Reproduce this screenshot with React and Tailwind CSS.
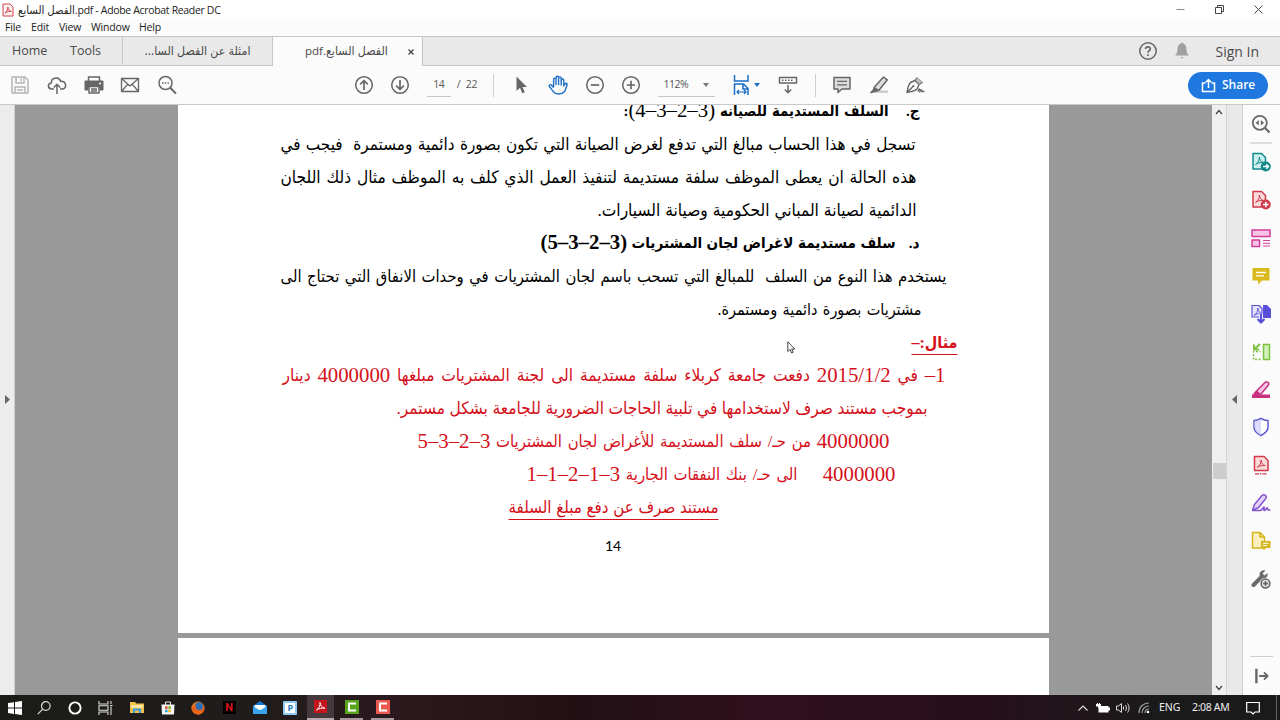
import clsx from "clsx";

const UI = "font-['Open_Sans','DejaVu_Sans_Condensed','DejaVu_Sans',sans-serif]";
const DOC =
  "font-['Liberation_Serif','DejaVu_Sans_Condensed','DejaVu_Sans',serif]";

function Icon({ size = 20, className, children }) {
  return (
    <svg
      width={size}
      height={size}
      viewBox="0 0 20 20"
      fill="none"
      stroke="currentColor"
      strokeWidth="1.5"
      strokeLinejoin="round"
      className={clsx("block shrink-0", className)}
    >
      {children}
    </svg>
  );
}

const SWOOSH = "M5.5 12.5C8.5 10.5 9.6 7.5 9.3 5C9.5 8 11 10 13.5 10.6C10.5 10.2 7.5 10.8 5.5 12.5Z";

function TitleBar() {
  return (
    <div className="flex h-[19px] items-center bg-white pl-[2px] text-[#222]">
      <svg width="12" height="14" viewBox="0 0 12 14" fill="none" stroke="#d0444a">
        <path d="M1 1H8L11 4V13H1Z" fill="#fdf1f1" />
        <path d="M3 10C5 8.500 6 6.500 5.800 4C6 6.500 7.500 8 9.300 8.500C7 8.300 5 8.800 3 10Z" />
      </svg>
      <span className="ml-[4px] text-[10.5px] leading-[19px] tracking-[-0.33px] whitespace-nowrap">
        <bdi dir="ltr">
          <span className="text-[11.3px] tracking-normal">الفصل السابع</span>.pdf - Adobe Acrobat Reader DC
        </bdi>
      </span>
      <svg width="100" height="19" viewBox="0 0 100 19" fill="none" stroke="#444" className="ml-auto overflow-visible">
        <path d="M16.500 9.500H24.500" stroke="#888" />
        <path d="M55.500 7.500H61.500V13.500H55.500ZM57.500 7V5.500H63.500V11.500H62" />
        <path d="M94.500 5.500L102.500 13.500M102.500 5.500L94.500 13.500" />
      </svg>
      <span className="w-[20px]" />
    </div>
  );
}

function MenuBar() {
  return (
    <div className="flex h-[17px] items-center bg-[#fbfbfb] pl-[5px] text-[10.5px] leading-[17px] tracking-[-0.15px] text-[#222]">
      <span className="w-[26px]">File</span>
      <span className="w-[28px]">Edit</span>
      <span className="w-[32px]">View</span>
      <span className="w-[48px]">Window</span>
      <span>Help</span>
    </div>
  );
}

function TabBar() {
  return (
    <div className="flex h-[30px] items-stretch border-y border-[#c6c6c6] bg-[#e9e9e9] text-[13px] text-[#4a4a4a]">
      <div className="flex w-[123px] items-center border-r border-[#c6c6c6] pl-[12px] text-[12.5px]">
        <span className="w-[58px]">Home</span>
        <span>Tools</span>
      </div>
      <div className="flex w-[150px] items-center justify-center border-r border-[#c6c6c6] text-[12.3px] whitespace-nowrap">
        <bdi dir="rtl">امثلة عن الفصل السا...</bdi>
      </div>
      <div className="-mb-px flex w-[150px] items-center border-r border-[#c6c6c6] bg-[#fbfbfb] pr-[8px] pl-[32px] text-[11.5px] whitespace-nowrap">
        <bdi dir="rtl">
          <span className="text-[12.3px]">الفصل السابع</span>.pdf
        </bdi>
        <svg width="6" height="6" viewBox="0 0 6 6" stroke="#444" strokeWidth="1.3" className="ml-auto">
          <path d="M.5 .5L5.500 5.500M5.500 .5L.5 5.500" />
        </svg>
      </div>
      <div className="ml-auto flex items-center pr-[21px]">
        <Icon size={20} className="text-[#666]">
          <circle cx="10" cy="10" r="8.200" />
          <path d="M7.600 8C7.600 5.200 12.300 5.200 12.300 7.900C12.300 9.600 10 9.700 10 11.700M10 13.200V15" strokeWidth="1.700" />
        </Icon>
        <Icon size={18} className="ml-[15px] text-[#a0a0a0]">
          <path d="M10 1.500C6 2 5 5 5 9C5 12 3.500 13.500 2.500 15H17.500C16.500 13.500 15 12 15 9C15 5 14 2 10 1.500ZM8.500 17H11.500V18H8.500Z" fill="currentColor" stroke="none" />
          <circle cx="10" cy="2" r="1.300" fill="currentColor" stroke="none" />
        </Icon>
        <span className="ml-[24px] text-[14px] whitespace-nowrap">Sign In</span>
      </div>
    </div>
  );
}

function ToolCell({ children, className = "text-[#666]" }) {
  return (
    <div className={clsx("flex w-[36.7px] shrink-0 items-center justify-center", className)}>
      {children}
    </div>
  );
}

function Caret({ className }) {
  return (
    <svg width="6" height="4" viewBox="0 0 6 4" fill="currentColor" className={className}>
      <path d="M0 0H6L3 4Z" />
    </svg>
  );
}

function Toolbar() {
  return (
    <div className="flex h-[39px] items-center border-b border-[#c9c9c9] bg-[#fbfbfb] pl-[2px] text-[10.5px] text-[#555]">
      <ToolCell className="text-[#b5b5b5]">
        <Icon>
          <path d="M2 2H15L18 5V18H2ZM6 2V8H14V2M5 18V12H15V18M11 3.500V6.500M7 15H13" />
        </Icon>
      </ToolCell>
      <ToolCell>
        <Icon>
          <path d="M7 14H5C.5 14 .2 8.500 4.300 8C4.300 2.500 12 1 13.600 6.300C19.500 5.800 20.500 14 15 14H13M10 19V9.500M6.800 12.500L10 9.300L13.200 12.500" />
        </Icon>
      </ToolCell>
      <ToolCell>
        <Icon>
          <path d="M4.500 6V2H15.500V6" />
          <path d="M1 6H19V15H16V12H4V15H1Z" fill="currentColor" strokeWidth="1" />
          <path d="M5 11.500H15V18H5ZM7 14H13M7 16H13" fill="#fbfbfb" />
          <path d="M15 8.500H17" stroke="#fff" />
        </Icon>
      </ToolCell>
      <ToolCell>
        <Icon>
          <path d="M1.500 3.500H18.500V16.500H1.500ZM1.500 3.500L10 11L18.500 3.500M1.500 16.500L7.800 9.200M18.500 16.500L12.200 9.200" strokeWidth="1.300" />
        </Icon>
      </ToolCell>
      <ToolCell>
        <Icon>
          <circle cx="8.500" cy="8" r="6.500" />
          <path d="M13.200 12.800L19 18.600" strokeWidth="2" />
          <path d="M5 8H6.500M7.800 8H9.300M10.600 8H12" />
        </Icon>
      </ToolCell>

      <div className="ml-[160px] flex">
        <ToolCell>
          <Icon>
            <circle cx="10" cy="10" r="8.300" />
            <path d="M10 15V5.500M6.200 9.300L10 5.500L13.800 9.300" strokeWidth="1.700" />
          </Icon>
        </ToolCell>
        <ToolCell>
          <Icon>
            <circle cx="10" cy="10" r="8.300" />
            <path d="M10 5V14.500M6.200 10.700L10 14.500L13.800 10.700" strokeWidth="1.700" />
          </Icon>
        </ToolCell>
      </div>
      <div className="ml-[8px] flex h-[24px] w-[24px] items-center justify-center border-b border-[#c6c6c6] tracking-[-0.4px]">
        14
      </div>
      <span className="ml-[6px] w-[9px]">/</span>
      <span className="w-[12px] tracking-[-0.4px]">22</span>
      <div className="ml-[15px] h-[23px] w-px bg-[#cfcfcf]" />
      <div className="ml-[9px] flex">
        <ToolCell>
          <Icon>
            <path d="M5.500 1.500V16L9 12.800L11.300 18.300L13.800 17.200L11.500 12H16Z" fill="currentColor" stroke="none" />
          </Icon>
        </ToolCell>
        <ToolCell className="text-[#1a6dc4]">
          <Icon>
            <path d="M5.600 12V4.500C5.600 2.600 8 2.600 8 4.500V9.500V2.800C8 .8 10.600 .8 10.600 2.800V9.500V3.300C10.600 1.400 13.200 1.400 13.200 3.300V10V5.300C13.200 3.500 15.800 3.500 15.800 5.300V11L17 9C18 7.500 19.500 8.500 19 10C17.500 14.500 17 19 11 19C6 19 5 16.500 1.500 11.500C.5 10 2.500 9 3.600 10.200L5.600 12.600" strokeWidth="1.400" />
          </Icon>
        </ToolCell>
        <ToolCell>
          <Icon>
            <circle cx="10" cy="10" r="8.300" />
            <path d="M5.800 10H14.200" strokeWidth="1.700" />
          </Icon>
        </ToolCell>
        <ToolCell>
          <Icon>
            <circle cx="10" cy="10" r="8.300" />
            <path d="M5.800 10H14.200M10 5.800V14.200" strokeWidth="1.700" />
          </Icon>
        </ToolCell>
      </div>
      <div className="ml-[8px] flex h-[24px] w-[57px] items-center border-b border-[#c6c6c6] pr-[6px] pl-[6px] tracking-[-0.5px]">
        112%
        <Caret className="ml-auto text-[#777]" />
      </div>
      <Icon className="ml-[16px] text-[#1a6dc4]">
        <path d="M3.500 0V6H17V0M3.500 20V9H12.500L17 13.500V20M12 9V14H17" strokeLinejoin="miter" />
        <path d="M6 17H15M8 15L6 17L8 19M13 15L15 17L13 19" strokeWidth="1.200" />
      </Icon>
      <Caret className="ml-[3px] text-[#1a6dc4]" />
      <div className="ml-[18px]">
        <Icon className="text-[#666]">
          <path d="M1.500 2.500H18.500V8H1.500ZM10 10V17.500M6.800 14.500L10 17.700L13.200 14.500" />
          <path d="M4 5.300H16" strokeDasharray="1.500 1.500" />
        </Icon>
      </div>
      <div className="ml-[17px] h-[23px] w-px bg-[#cfcfcf]" />
      <div className="ml-[8px] flex">
        <ToolCell>
          <Icon>
            <path d="M2 2.500H18V14H10L6 17.500V14H2Z" fill="#ddd" />
            <path d="M5 6.300H15M5 9.800H15" strokeWidth="1.200" />
          </Icon>
        </ToolCell>
        <ToolCell>
          <Icon>
            <path d="M8 15.500H19V18H5Z" fill="#ccc" stroke="none" />
            <path d="M5.500 12L14.500 2L18.300 4.800L10.200 15L5.500 16.500L2 17.500L4.500 15Z" fill="#ddd" />
            <path d="M5.500 12L10 15L2 17.800Z" fill="currentColor" stroke="none" />
          </Icon>
        </ToolCell>
        <ToolCell>
          <Icon>
            <path d="M2 17.500C3 13 3 10 5.500 7.500L10 5.500L14 9.500L12 14C9.500 16.500 6 16.500 2 17.500ZM2 17.500L8 11.500M10 5.500L12 3L17 7.500L14 9.500" strokeWidth="1.400" />
            <path d="M12.500 2.500L17 7L14 9L11 5Z" fill="#bbb" stroke="none" />
            <circle cx="8.500" cy="11" r="1.100" fill="currentColor" stroke="none" />
            <path d="M13 16.500C14 13 15 13 14.800 17C16 14 17 14 16.800 16.500H19.500" strokeWidth="1.300" />
          </Icon>
        </ToolCell>
      </div>
      <div className="mr-[12px] ml-auto flex h-[27px] w-[80px] items-center rounded-full bg-[#1f78e0] pl-[13px] text-[12px] font-semibold text-white">
        <svg width="15" height="15" viewBox="0 0 15 15" fill="none" stroke="#fff" strokeWidth="1.500">
          <path d="M4.500 5H1.500V13.500H13.500V5H10.500M7.500 10V1.800M4.800 4.300L7.500 1.500L10.200 4.300" />
        </svg>
        <span className="ml-[6px]">Share</span>
      </div>
    </div>
  );
}

// One justified line of the document; type size, width and right edge come in as classes.
function Line({ className, children }) {
  return (
    <div
      className={clsx(
        "h-[33px] leading-[33px] whitespace-nowrap [text-align-last:justify]",
        className
      )}
    >
      {children}
    </div>
  );
}

function Num({ children }) {
  return (
    <span dir="ltr" className="inline-block align-[-1px] text-[20.8px] leading-none">
      {children}
    </span>
  );
}

function Page() {
  return (
    <div
      dir="rtl"
      className={clsx("h-[528px] w-[871px] shrink-0 overflow-hidden bg-white text-black", DOC)}
    >
      <div className="-mt-[10px]">
        <div className="flex h-[33px]">
          <Line className="mr-[129px] w-[16px] text-[15px] font-bold">ج.</Line>
          <Line className="mr-[15px] w-[265px] text-[14.8px]">
            <b>السلف المستديمة للصيانه</b> <Num>(4–3–2–3)</Num>
            <b>:</b>
          </Line>
        </div>
        <Line className="mr-[133px] w-[635px] text-[17px]">
          تسجل في هذا الحساب مبالغ التي تدفع لغرض الصيانة التي تكون بصورة دائمية
          ومستمرة&nbsp; فيجب في
        </Line>
        <Line className="mr-[132px] w-[636px] text-[17.2px]">
          هذه الحالة ان يعطى الموظف سلفة مستديمة لتنفيذ العمل الذي كلف به الموظف
          مثال ذلك اللجان
        </Line>
        <Line className="mr-[132px] w-[319px] text-[17.2px]">
          الدائمية لصيانة المباني الحكومية وصيانة السيارات.
        </Line>
        <div className="flex h-[33px] font-bold">
          <Line className="mr-[129px] w-[11px] text-[15px]">د.</Line>
          <Line className="mr-[13px] w-[355px] text-[15.1px]">
            سلف مستديمة لاغراض لجان المشتريات <Num>(5–3–2–3)</Num>
          </Line>
        </div>
        <Line className="mr-[102px] w-[666px] text-[16.5px]">
          يستخدم هذا النوع من السلف&nbsp; للمبالغ التي تسحب باسم لجان المشتريات في
          وحدات الانفاق التي تحتاج الى
        </Line>
        <Line className="mr-[127px] w-[204px] text-[16px]">مشتريات بصورة دائمية ومستمرة.</Line>
        <div className="text-[#d4101a]">
          <Line className="mr-[91px] w-[47px] text-[16px] font-bold underline underline-offset-[6px]">
            مثال:–
          </Line>
          <Line className="mr-[103px] w-[663px] text-[17.2px]">
            <Num>–1</Num> في <Num>2015/1/2</Num> دفعت جامعة كربلاء سلفة مستديمة الى
            لجنة المشتريات مبلغها <Num>4000000</Num> دينار
          </Line>
          <Line className="mr-[121px] w-[531px] text-[17.2px]">
            بموجب مستند صرف لاستخدامها في تلبية الحاجات الضرورية للجامعة بشكل مستمر.
          </Line>
          <Line className="mr-[159px] w-[472px] text-[16.5px]">
            <Num>4000000</Num> من حـ/ سلف المستديمة للأغراض لجان المشتريات{" "}
            <Num>5–3–2–3</Num>
          </Line>
          <div className="flex h-[33px]">
            <Line className="mr-[153px] w-[73px] text-[16px]">
              <Num>4000000</Num>
            </Line>
            <Line className="mr-[25px] w-[271px] text-[16.5px]">
              الى حـ/ بنك النفقات الجارية <Num>1–1–2–1–3</Num>
            </Line>
          </div>
          <Line className="mr-[330px] w-[210px] text-[16.8px] underline underline-offset-[6px]">
            مستند صرف عن دفع مبلغ السلفة
          </Line>
        </div>
        <div className="mt-[10px] text-center font-['Lato',sans-serif] text-[14px] leading-[24px]">
          14
        </div>
      </div>
    </div>
  );
}

function SideCell({ children, className }) {
  return (
    <div className={clsx("flex h-[37.950px] shrink-0 items-center justify-center pr-[2px]", className)}>
      {children}
    </div>
  );
}

function ToolsPane() {
  return (
    <div className="relative flex w-[38px] flex-col border-l border-[#d0d0d0] bg-[#fbfbfb]">
      <div className="absolute top-[37px] left-[7px] h-[2px] w-[22px] bg-[#dedede]" />
      <SideCell className="text-[#6a6a6a]">
        <Icon>
          <circle cx="8.800" cy="8.800" r="7" strokeWidth="1.800" />
          <path d="M14 14L18.500 18.500" strokeWidth="2.300" />
          <path d="M7.800 6V11.600L4.500 8.800ZM9.800 6V11.600L13.100 8.800Z" fill="currentColor" stroke="none" />
        </Icon>
      </SideCell>
      <SideCell className="text-[#12888a]">
        <Icon>
          <path d="M2 1.500H10.500L14.500 5.500V17H2Z" fill="#c9eeee" />
          <path d={SWOOSH} strokeWidth="1" transform="translate(-1 0)" />
          <circle cx="14.800" cy="14.500" r="5" fill="currentColor" stroke="none" />
          <path d="M12 14.500H17.300M15.300 12.300L17.500 14.500L15.300 16.700" stroke="#fff" />
        </Icon>
      </SideCell>
      <SideCell className="text-[#d13a4a]">
        <Icon>
          <path d="M2 1.500H10.500L14.500 5.500V17H2Z" fill="#fbdada" />
          <path d={SWOOSH} strokeWidth="1" transform="translate(-1 0)" />
          <circle cx="14.800" cy="14.500" r="5" fill="currentColor" stroke="none" />
          <path d="M12 14.500H17.600M14.800 11.700V17.300" stroke="#fff" />
        </Icon>
      </SideCell>
      <SideCell className="text-[#d23c9c]">
        <Icon>
          <path d="M1 2H19V8.500H1ZM1 12H8.500V18.500H1Z" fill="#f8c6e4" />
          <path d="M12 12.500H19M12 15.300H19M12 18H19" strokeWidth="1" />
        </Icon>
      </SideCell>
      <SideCell className="text-[#d9b91c]">
        <Icon>
          <path d="M1.500 2H18.500V14.500H11L7 18.500V14.500H1.500Z" fill="currentColor" stroke="none" />
          <path d="M5 6.500H15M5 9.800H13" stroke="#fff" strokeWidth="1.300" />
        </Icon>
      </SideCell>
      <SideCell className="text-[#5a50d8]">
        <Icon>
          <path d="M12 1H16L20 5V14H12Z" fill="currentColor" stroke="none" />
          <path d="M1 1.500H8L11 4.500V13H1Z" fill="#e4e2fb" strokeWidth="1.200" />
          <path d={SWOOSH} strokeWidth=".9" transform="translate(-2.500 -1)" />
          <path d="M10 9.500V18M6.500 14.800L10 18.500L13.500 14.800" stroke="#fbfbfb" strokeWidth="4" />
          <path d="M10 9.500V18M6.500 15L10 18.500L13.500 15" strokeWidth="2.200" />
        </Icon>
      </SideCell>
      <SideCell className="text-[#7cc142]">
        <Icon>
          <path d="M12.500 2.500H18.500V17.500H12.500Z" fill="#d3f2b9" />
          <path d="M9.500 17.500H2.500V9.500H9.500" strokeDasharray="2 1.500" />
          <path d="M9 2L4 6.500M3 2.500V7.500H8" strokeWidth="1.900" />
        </Icon>
      </SideCell>
      <SideCell className="text-[#c9307f]">
        <Icon>
          <path d="M1 14.500H19V18H1Z" fill="currentColor" stroke="none" />
          <path d="M6 10.500L14.500 2C17 1.500 18.500 3 17.500 5L10 14H3Z" fill="#f8c6e4" />
          <path d="M1.500 16L6 10.500L9.500 14Z" fill="currentColor" stroke="none" />
        </Icon>
      </SideCell>
      <SideCell className="text-[#5a58d0]">
        <Icon>
          <path d="M10 1.500C12.500 3 15 3.500 17 3.500V10C17 14.500 13 17 10 18.500C7 17 3 14.500 3 10V3.500C5 3.500 7.500 3 10 1.500Z" fill="#fff" />
          <path d="M10 2.300C7.500 3.500 5.500 4.200 3.700 4.200V10C3.700 14 7 16.300 10 17.700Z" fill="#dcdbfb" stroke="none" />
        </Icon>
      </SideCell>
      <SideCell className="text-[#d13a4a]">
        <Icon>
          <path d="M3.500 1.500H13L17 5.500V15.500H3.500Z" fill="#fbdada" />
          <path d={SWOOSH} strokeWidth="1" transform="translate(.7 0)" />
          <path d="M4 18.800H16.500" strokeDasharray="4 1 1.500 1" strokeWidth="1.200" />
        </Icon>
      </SideCell>
      <SideCell className="text-[#8353cc]">
        <Icon>
          <path d="M1.500 17.500L3.500 11.500L11 2.500C13 .8 16.500 3 14.800 5.500L7.500 14.500L1.500 17.500Z" fill="#e5d5fa" />
          <path d="M2 17.500H9C11.500 17.500 12 13.500 13 14C13.800 14.500 12 17.500 13.500 17.500C15 17.500 15.500 14.500 16.300 15C17 15.500 15.500 17.500 19.500 17" strokeWidth="1.600" />
        </Icon>
      </SideCell>
      <SideCell className="text-[#d4b41c]">
        <Icon>
          <path d="M1.500 1.500H9L13.500 6V17H1.500Z" fill="#fbf0bd" />
          <path d="M9 1.500V6H13.500" />
          <path d="M10 10H19.500V17H15L12.500 19.500V17H10Z" fill="currentColor" stroke="none" />
          <path d="M12 12.300H17.500M12 14.600H16" stroke="#fff" strokeWidth="1" />
        </Icon>
      </SideCell>
      <SideCell className="text-[#6a6a6a]">
        <Icon>
          <path d="M2.500 16L10 8.500" strokeWidth="4" strokeLinecap="round" />
          <path d="M14.500 1.500C10 .5 7.500 4 9 7.500L12 10C15 10 17 7.500 16.500 4L13.500 6.500L11.500 4.500Z" fill="currentColor" stroke="none" />
          <circle cx="14.500" cy="14.500" r="5.800" fill="#fbfbfb" stroke="none" />
          <circle cx="14.500" cy="14.500" r="4.300" strokeWidth="1.800" />
          <path d="M12 14.500H17M14.500 12V17" strokeWidth="1.800" />
        </Icon>
      </SideCell>
      <div className="mx-[7px] mt-auto h-px bg-[#cfcfcf]" />
      <SideCell className="text-[#666]">
        <Icon size={16} className="ml-[2px]">
          <path d="M3 1V19" strokeWidth="3" />
          <path d="M6.500 10H17M12.500 5.500L17 10L12.500 14.500" strokeWidth="2.300" />
        </Icon>
      </SideCell>
    </div>
  );
}

function Viewer() {
  return (
    <div className="flex h-[590px]">
      <div className="flex w-[15px] items-center border-r border-[#cfcfcf] bg-[#ececec] pb-[2px] pl-[5px]">
        <svg width="5" height="9" viewBox="0 0 5 9" fill="#666">
          <path d="M0 0V9L5 4.500Z" />
        </svg>
      </div>
      <div className="relative flex flex-1 flex-col items-center overflow-hidden bg-[#999] pr-[1px]">
        <Page />
        <div className="mt-[5px] h-[60px] w-[871px] shrink-0 bg-white" />
        <svg width="9" height="13" viewBox="0 0 9 13" fill="#fff" stroke="#333" strokeWidth=".9" className="absolute top-[236px] left-[772px]">
          <path d="M.8 .8V10.500L3 8.500L4.700 12L6.200 11.300L4.700 8H7.800Z" />
        </svg>
      </div>
      <div className="flex w-[14px] flex-col items-center bg-[#efefef] py-[4px]">
        <svg width="8" height="6" viewBox="0 0 8 6" fill="none" stroke="#444" strokeWidth="1.300">
          <path d="M1 5L4 1.500L7 5" />
        </svg>
        <div className="mt-[348px] h-[16px] w-[13px] bg-[#cdcdcd]" />
        <svg width="8" height="6" viewBox="0 0 8 6" fill="none" stroke="#444" strokeWidth="1.300" className="mt-auto">
          <path d="M1 1L4 4.500L7 1" />
        </svg>
      </div>
      <div className="flex w-[16px] items-center justify-center border-l border-[#d4d4d4] bg-[#e9e9e9] pb-[2px]">
        <svg width="5" height="9" viewBox="0 0 5 9" fill="#666">
          <path d="M5 0V9L0 4.500Z" />
        </svg>
      </div>
      <ToolsPane />
    </div>
  );
}

function TaskCell({ children, className = "w-[30.8px]" }) {
  return (
    <div className={clsx("flex h-full shrink-0 items-center justify-center", className)}>
      {children}
    </div>
  );
}

function Taskbar() {
  return (
    <div className="flex h-[25px] items-center bg-[linear-gradient(90deg,#1b1c18_0%,#201c1c_20%,#2b191e_31%,#221015_45%,#300f1c_60%,#280e1b_75%,#1b1a1a_90%)] text-[11px] text-[#eee]">
      <TaskCell className="w-[29px]">
        <svg width="14" height="14" viewBox="0 0 14 14" fill="#fff">
          <path d="M0 2L6 1.200V6.600H0ZM7 1L14 0V6.600H7ZM0 7.500H6V12.900L0 12.100ZM7 7.500H14V14L7 13Z" />
        </svg>
      </TaskCell>
      <TaskCell>
        <svg width="14" height="14" viewBox="0 0 14 14" fill="none" stroke="#ddd" strokeWidth="1.200">
          <circle cx="8.800" cy="5" r="4.300" />
          <path d="M5.700 8.200L.8 13.200" />
        </svg>
      </TaskCell>
      <TaskCell>
        <svg width="14" height="14" viewBox="0 0 14 14" fill="none" stroke="#fff" strokeWidth="1.900">
          <circle cx="7" cy="7" r="5.600" />
        </svg>
      </TaskCell>
      <TaskCell>
        <svg width="15" height="14" viewBox="0 0 15 14" fill="none" stroke="#ddd" strokeWidth="1.100">
          <path d="M1 0V3H10V0M1 14V11H10V14M1 4.800H10V9.200H1ZM13 0V3M13 5.500V14M12 4.500H14.500" />
        </svg>
      </TaskCell>
      <TaskCell>
        <svg width="14" height="13" viewBox="0 0 14 13">
          <path d="M0 1H5L6.500 2.500H14V12H0Z" fill="#f0c04a" />
          <path d="M1 4H13V7H1Z" fill="#fbe49b" />
          <path d="M3 12V7.500H11V12H9V9.500H5V12Z" fill="#3f9be0" />
        </svg>
      </TaskCell>
      <TaskCell>
        <svg width="14" height="14" viewBox="0 0 14 14">
          <path d="M4.500 4V1H9.500V4" fill="none" stroke="#eee" />
          <path d="M.5 3.500H13.500L13 13.500H1Z" fill="#f4f4f4" />
          <path d="M4 5.300H6.600V7.900H4Z" fill="#e5512d" />
          <path d="M7.300 5.300H9.900V7.900H7.300Z" fill="#7bb52e" />
          <path d="M4 8.600H6.600V11.200H4Z" fill="#2b9fe0" />
          <path d="M7.300 8.600H9.900V11.200H7.300Z" fill="#f4b81c" />
        </svg>
      </TaskCell>
      <TaskCell>
        <svg width="14" height="14" viewBox="0 0 14 14">
          <circle cx="7" cy="7" r="6.500" fill="#ee7a22" />
          <circle cx="7.800" cy="5.600" r="4.300" fill="#2a6fb8" />
          <path d="M.6 5C2 6 3 4 5.500 4.500C4 6.500 5 9 8.500 9C11 9 12.500 7 12.500 4C14.500 8 12.500 13.500 7 13.500C3 13.500 0 10 .6 5Z" fill="#e8641b" />
        </svg>
      </TaskCell>
      <TaskCell>
        <div className="flex h-[13px] w-[13px] items-center justify-center bg-black font-['Roboto',sans-serif] text-[11px] leading-none font-bold text-[#d8141c]">
          N
        </div>
      </TaskCell>
      <TaskCell>
        <svg width="14" height="14" viewBox="0 0 14 14">
          <path d="M0 5L7 0L14 5V13H0Z" fill="#1578cf" />
          <path d="M1.500 4H12.500V9H1.500Z" fill="#fff" />
          <path d="M0 5L7 9.500L14 5V13H0Z" fill="#3aa5ee" />
        </svg>
      </TaskCell>
      <TaskCell className="w-[30px]">
        <div className="flex h-[14px] w-[14px] items-center justify-center rounded-[1px] border-2 border-[#8fcbee] bg-white text-[9px] leading-none font-bold text-[#1a7bc0]">
          P
        </div>
      </TaskCell>
      <TaskCell className="ml-[2px] w-[27px] border-b-2 border-[#b9a9ad] bg-[#46393d]">
        <svg width="13" height="13" viewBox="0 0 13 13">
          <path d="M0 0H13V13H0Z" fill="#c4161c" />
          <path d="M2.500 10C5 8.500 6.300 5.500 6 2.500C6.300 5.500 8 7.800 10.800 8.200C8 7.800 5 8.500 2.500 10Z" fill="none" stroke="#fff" />
        </svg>
      </TaskCell>
      <TaskCell className="ml-[2px] w-[31px]">
        <div className="flex h-full w-[23px] items-center justify-center border-b-2 border-[#a8999d]">
          <svg width="14" height="14" viewBox="0 0 14 14">
            <path d="M0 0H14V14H0Z" fill="#5aa51e" />
            <path d="M11 3.500H4V10.500H11" fill="none" stroke="#fff" strokeWidth="2" />
          </svg>
        </div>
      </TaskCell>
      <TaskCell>
        <div className="flex h-full w-[23px] items-center justify-center border-b-2 border-[#a8999d]">
          <svg width="14" height="14" viewBox="0 0 14 14">
            <path d="M0 0H14V14H0Z" fill="#ea5a50" />
            <path d="M11 3.500H4V10.500H11" fill="none" stroke="#fff" strokeWidth="2" />
          </svg>
        </div>
      </TaskCell>

      <div className="ml-auto flex h-full items-center">
        <svg width="10" height="6" viewBox="0 0 10 6" fill="none" stroke="#ddd" strokeWidth="1.100">
          <path d="M.5 5.500L5 1L9.500 5.500" />
        </svg>
        <svg width="14" height="10" viewBox="0 0 14 10" fill="#fff" className="ml-[8px]">
          <path d="M2.500 3H12.500V4.500H14V7.500H12.500V9.500H2.500ZM0 1H1V0H2V1H3V0H4V1H5V3.500H3V5H2V3.500H0Z" />
        </svg>
        <svg width="14" height="12" viewBox="0 0 14 12" fill="none" stroke="#ddd" className="ml-[6px]">
          <path d="M.5 4H2.500L5.500 1.500V10.500L2.500 8H.5ZM7.500 4.500V7.500M9.500 3C10.700 4.800 10.700 7.200 9.500 9M11.500 1.500C13.500 4 13.500 8 11.500 10.500" />
        </svg>
        <svg width="12" height="12" viewBox="0 0 12 12" fill="none" stroke="#999" strokeWidth="1.200" className="ml-[8px]">
          <path d="M1 11C1 5 5 1 11 1M4 11C4 7 7 4 11 4M7 11C7 8.500 8.500 7 11 7" />
          <circle cx="10" cy="10" r="1.300" fill="#fff" stroke="none" />
        </svg>
        <span className="ml-[9px] w-[33px] text-[10.500px] font-['Noto_Sans',sans-serif]">ENG</span>
        <span className="w-[54px] text-[10.500px] tracking-[-.35px] whitespace-nowrap font-['Noto_Sans',sans-serif]">
          2:08 AM
        </span>
        <svg width="14" height="14" viewBox="0 0 14 14" fill="none" stroke="#fff" strokeWidth="1.200">
          <path d="M.7 1.500H13.300V11H9L7 13L5 11H.7Z" />
        </svg>
        <div className="mr-[3px] ml-[16px] h-full w-px bg-[#666]" />
      </div>
    </div>
  );
}

export default function App() {
  return (
    <div className={clsx("flex h-[720px] w-[1280px] flex-col overflow-hidden bg-white", UI)}>
      <TitleBar />
      <MenuBar />
      <TabBar />
      <Toolbar />
      <Viewer />
      <Taskbar />
    </div>
  );
}
